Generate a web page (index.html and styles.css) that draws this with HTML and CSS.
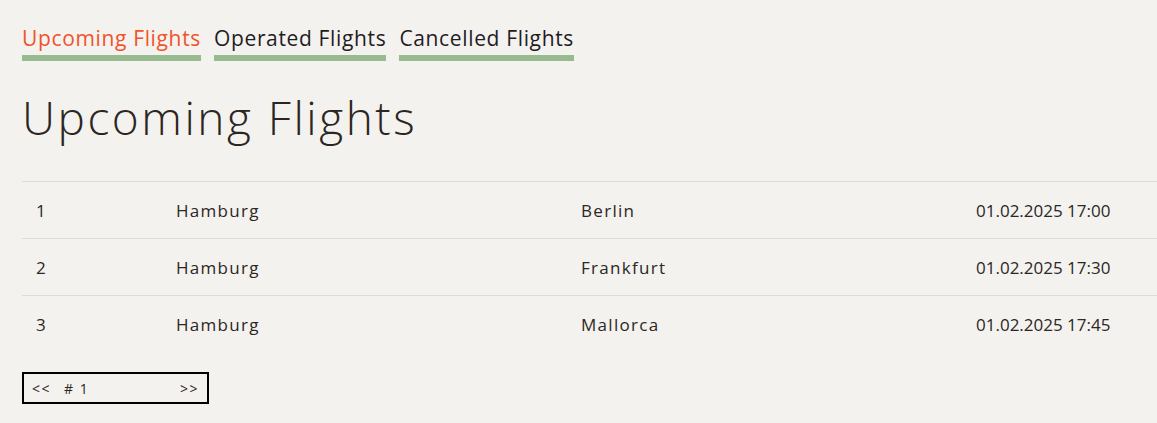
FILE: index.html
```html
<!DOCTYPE html>
<html lang="de">
<head>
<meta charset="utf-8">
<title>Flights</title>
<link rel="stylesheet" href="styles.css">
</head>
<body>
<div class="page">
  <nav class="tabs">
    <a class="tab active">Upcoming Flights</a>
    <a class="tab">Operated Flights</a>
    <a class="tab">Cancelled Flights</a>
  </nav>
  <h1 class="title">Upcoming Flights</h1>
  <table class="flights">
    <colgroup>
      <col class="c-id"><col class="c-from"><col class="c-to"><col class="c-time">
    </colgroup>
    <tbody>
      <tr><td>1</td><td>Hamburg</td><td>Berlin</td><td class="time">01.02.2025 17:00</td></tr>
      <tr><td>2</td><td>Hamburg</td><td>Frankfurt</td><td class="time">01.02.2025 17:30</td></tr>
      <tr><td>3</td><td>Hamburg</td><td>Mallorca</td><td class="time">01.02.2025 17:45</td></tr>
    </tbody>
  </table>
  <div class="pager">
    <span class="prev">&lt;&lt;</span>
    <span class="num"># 1</span>
    <span class="next">&gt;&gt;</span>
  </div>
</div>
</body>
</html>
```
FILE: styles.css
```css
html, body {
  margin: 0;
  padding: 0;
  background: #f4f2ef;
}
body {
  font-family: "Open Sans", "Noto Sans", sans-serif;
  color: #2b2724;
  overflow: hidden;
}
.page {
  padding: 25px 0 0 22px;
}
.tabs {
  display: flex;
  gap: 13px;
}
.tab {
  font-size: 21px;
  letter-spacing: 0.65px;
  line-height: 27px;
  padding-bottom: 3px;
  border-bottom: 6px solid #97bb8f;
  color: #1f1d24;
  cursor: pointer;
}
.tab.active {
  color: #f0532b;
}
.title {
  margin: 26px 0 34px;
  font-size: 46px;
  letter-spacing: 2.5px;
  font-weight: 300;
  line-height: 60px;
  color: #2b2622;
}
.flights {
  width: 100%;
  border-collapse: collapse;
  table-layout: fixed;
  font-size: 17px;
  letter-spacing: 1.3px;
}
.c-id { width: 140px; }
.c-from { width: 405px; }
.c-to { width: 395px; }
.flights td {
  height: 56px;
  padding: 0 14px;
  border-top: 1px solid #dcdbe0;
  white-space: nowrap;
}
.flights td.time {
  letter-spacing: 0;
}
.pager {
  margin-top: 20px;
  width: 175px;
  height: 28px;
  border: 2px solid #000;
  display: flex;
  align-items: center;
  font-size: 14px;
  letter-spacing: 1.5px;
  padding: 0 0 0 8px;
  box-sizing: content-box;
}
.prev { width: 32px; }
.num { flex: 1; }
.next { width: 27px; }
```
